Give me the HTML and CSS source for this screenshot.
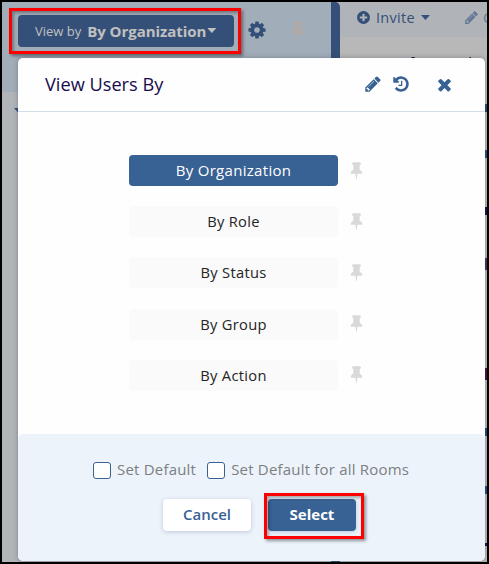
FILE: index.html
```html
<!DOCTYPE html>
<html lang="en">
<head>
<meta charset="utf-8">
<title>View Users By</title>
<link rel="stylesheet" href="styles.css">
</head>
<body>
<svg class="defs" width="0" height="0">
  <symbol id="pin" viewBox="0 0 1792 1792"><path d="M1472 1216q0 26-19 45t-45 19h-429l-51 483q-2 12-10.5 20.500t-20.500 8.500h-1q-27 0-32-27l-76-485h-404q-26 0-45-19t-19-45q0-123 78.500-221.500t177.500-98.500v-512q-52 0-90-38t-38-90 38-90 90-38h640q52 0 90 38t38 90-38 90-90 38v512q99 0 177.500 98.500t78.500 221.500z"/></symbol>
  <symbol id="pencil" viewBox="0 0 1792 1792"><path d="M491 1536l91-91-235-235-91 91v107h128v128h107zm523-928q0-22-22-22-10 0-17 7l-542 542q-7 7-7 17 0 22 22 22 10 0 17-7l542-542q7-7 7-17zm-54-192l416 416-832 832h-416v-416zm683 96q0 53-37 90l-166 166-416-416 166-165q36-38 90-38 53 0 91 38l235 234q37 39 37 91z"/></symbol>
  <symbol id="history" viewBox="0 0 1792 1792"><path d="M1664 896q0 156-61 298t-164 245-245 164-298 61q-172 0-327-72.5t-264-204.5q-7-10-6.5-22.5t8.5-20.5l137-138q10-9 25-9 16 2 23 12 73 95 179 147t225 52q104 0 198.5-40.5t163.5-109.500 109.500-163.500 40.500-198.500-40.500-198.500-109.500-163.500-163.500-109.500-198.500-40.500q-98 0-188 35.500t-160 101.500l137 138q31 30 14 69-17 40-59 40h-448q-26 0-45-19t-19-45v-448q0-42 40-59 39-17 69 14l130 129q107-101 244.500-156.500t284.500-55.500q156 0 298 61t245 164 164 245 61 298zm-640-288v448q0 14-9 23t-23 9h-320q-14 0-23-9t-9-23v-64q0-14 9-23t23-9h224v-352q0-14 9-23t23-9h64q14 0 23 9t9 23z"/></symbol>
  <symbol id="times" viewBox="0 0 1792 1792"><path d="M1490 1322q0 40-28 68l-136 136q-28 28-68 28t-68-28l-294-294-294 294q-28 28-68 28t-68-28l-136-136q-28-28-28-68t28-68l294-294-294-294q-28-28-28-68t28-68l136-136q28-28 68-28t68 28l294 294 294-294q28-28 68-28t68 28l136 136q28 28 28 68t-28 68l-294 294 294 294q28 28 28 68z"/></symbol>
  <symbol id="cog" viewBox="0 0 1792 1792"><path d="M1152 896q0-106-75-181t-181-75-181 75-75 181 75 181 181 75 181-75 75-181zm512-109v222q0 12-8 23t-20 13l-185 28q-19 54-39 91 35 50 107 138 10 12 10 25t-9 23q-27 37-99 108t-94 71q-12 0-26-9l-138-108q-44 23-91 38-16 136-29 186-7 28-36 28h-222q-14 0-24.500-8.500t-11.500-21.500l-28-184q-49-16-90-37l-141 107q-10 9-25 9-14 0-25-11-126-114-165-168-7-10-7-23 0-12 8-23 15-21 51-66.500t54-70.500q-27-50-41-99l-183-27q-13-2-21-12.500t-8-23.500v-222q0-12 8-23t19-13l186-28q14-46 39-92-40-57-107-138-10-12-10-24 0-10 9-23 26-36 98.500-107.500t94.500-71.500q13 0 26 10l138 107q44-23 91-38 16-136 29-186 7-28 36-28h222q14 0 24.500 8.500t11.500 21.500l28 184q49 16 90 37l142-107q9-9 24-9 13 0 25 10 129 119 165 170 7 8 7 22 0 12-8 23-15 21-51 66.500t-54 70.500q26 50 41 98l183 28q13 2 21 12.500t8 23.500z"/></symbol>
  <symbol id="plus" viewBox="0 0 1792 1792"><path d="M1344 960v-128q0-26-19-45t-45-19h-256v-256q0-26-19-45t-45-19h-128q-26 0-45 19t-19 45v256h-256q-26 0-45 19t-19 45v128q0 26 19 45t45 19h256v256q0 26 19 45t45 19h128q26 0 45-19t19-45v-256h256q26 0 45-19t19-45zm320-64q0 209-103 385.500t-279.500 279.500-385.500 103-385.500-103-279.500-279.500-103-385.500 103-385.500 279.500-279.500 385.500-103 385.500 103 279.500 279.500 103 385.500z"/></symbol>
</svg>
<div class="frame">
  <div class="page">
    <aside class="side">
      <div class="side-top">
        <button class="viewby"><span class="viewby-label">View by</span><b>By Organization</b><i class="caret"></i></button>
        <svg class="icon cog"><use href="#cog"/></svg>
        <svg class="icon sidepin"><use href="#pin"/></svg>
      </div>
      <div class="side-body"><i class="caret tree"></i></div>
    </aside>
    <div class="divider"></div>
    <main class="main">
      <div class="toolbar">
        <svg class="icon plus"><use href="#plus"/></svg>
        <span class="invite">Invite</span><i class="caret"></i>
        <svg class="icon edit"><use href="#pencil"/></svg>
        <span class="cut">C</span>
      </div>
      <div class="count">1 - 10 of 2540 ul</div>
      <div class="edge">
        <i class="sliver s1"></i><i class="sliver s2"></i><i class="sliver s3"></i><i class="sliver s4"></i><i class="sliver s5"></i><i class="sliver s6"></i><i class="sliver s7"></i><i class="sliver s8"></i>
      </div>
    </main>
  </div>
  <section class="modal">
    <header class="head">
      <h1>View Users By</h1>
      <svg class="icon"><use href="#pencil"/></svg>
      <svg class="icon hist"><use href="#history"/></svg>
      <svg class="icon close"><use href="#times"/></svg>
    </header>
    <div class="options">
      <div class="row"><button class="option selected">By Organization</button><svg class="icon"><use href="#pin"/></svg></div>
      <div class="row"><button class="option">By Role</button><svg class="icon"><use href="#pin"/></svg></div>
      <div class="row"><button class="option">By Status</button><svg class="icon"><use href="#pin"/></svg></div>
      <div class="row"><button class="option">By Group</button><svg class="icon"><use href="#pin"/></svg></div>
      <div class="row"><button class="option">By Action</button><svg class="icon"><use href="#pin"/></svg></div>
    </div>
    <footer class="foot">
      <div class="checks">
        <label class="check"><i class="box"></i><span>Set Default</span></label>
        <label class="check"><i class="box"></i><span>Set Default for all Rooms</span></label>
      </div>
      <div class="actions">
        <button class="btn cancel">Cancel</button>
        <button class="btn select">Select</button>
      </div>
    </footer>
  </section>
  <div class="mark mark-view"></div>
  <div class="mark mark-select"></div>
</div>
</body>
</html>
```
FILE: styles.css
```css
* { box-sizing: border-box; }
body { margin: 0; font-family: "Open Sans", sans-serif; overflow: hidden; }
button { border: 0; padding: 0; font-family: inherit; white-space: nowrap; }
.defs { display: block; position: absolute; }
.frame { position: relative; width: 489px; height: 564px; border: 2px solid #000; overflow: hidden; }
.icon { width: 18px; height: 18px; flex: none; fill: #386194; display: block; }
.caret { width: 9px; height: 5px; background: currentColor; clip-path: polygon(0 0, 100% 0, 50% 100%); flex: none; }

.page { display: flex; height: 560px; background: #b8b8b8; }
.side { width: 329px; flex: none; display: flex; flex-direction: column; }
.side-top { height: 90px; padding: 13px 0 0 16px; display: flex; align-items: flex-start; background: #a2adba; }
.side-body { flex: 1; background: #b1b4b8; padding: 16px 0 0 12px; }
.tree { display: block; color: #355078; }
.viewby { width: 216px; height: 32px; border-radius: 4px; background: #355078; color: #c0c0c0; display: flex; align-items: center; padding: 0 0 1px 17px; font-size: 13px; }
.viewby b { font-size: 15px; font-weight: 700; letter-spacing: -.05px; margin: 0 1px 0 6px; }
.cog { width: 20px; height: 20px; margin: 5px 0 0 13px; fill: #355078; }
.sidepin { width: 21px; height: 20px; margin: 5px 0 0 20px; fill: #aeaaa8; }
.divider { width: 9px; flex: none; background: #355078; border-top-right-radius: 5px; }
.main { flex: 1; min-width: 0; overflow: hidden; }
.toolbar { height: 35px; display: flex; align-items: center; padding: 0 0 4px 16px; background: #b0b4b8; color: #355078; font-size: 14.5px; letter-spacing: .3px; white-space: nowrap; }
.plus { width: 15px; height: 15px; fill: #355078; margin-right: 5px; }
.toolbar .caret { margin-left: 6px; }
.edit { width: 15px; height: 15px; margin-left: 34px; fill: #667a95; }
.cut { margin-left: 4px; color: #667a95; }
.count { height: 20px; padding: 15px 0 0 15px; font-size: 15px; letter-spacing: .35px; line-height: 20px; color: #120a2c; white-space: nowrap; }
.edge { display: flex; flex-direction: column; align-items: flex-end; padding-top: 47px; }
.sliver { width: 2px; height: 8px; flex: none; background: #244979; }
.s2 { margin-top: 38px; }
.s3 { margin-top: 49px; background: #19104f; }
.s4 { margin-top: 43px; height: 12px; background: #52304f; }
.s5 { margin-top: 98px; height: 12px; background: #520b44; }
.s6 { margin-top: 48px; background: #244979; }
.s7 { margin-top: 50px; }
.s8 { margin-top: 49px; height: 3px; background: #19104f; }

.modal { position: absolute; left: 16px; top: 56px; width: 467px; height: 503px; background: #fefefe; border-radius: 5px; box-shadow: 0 0 5px rgba(40, 50, 65, .35); overflow: hidden; display: flex; flex-direction: column; }
.head { height: 54px; flex: none; border-bottom: 1px solid #d1dde9; display: flex; align-items: center; padding: 0 31px 2px 27px; }
h1 { margin: 0; flex: 1; font-size: 18.2px; font-weight: 400; color: #180c4d; }
.hist { margin-left: 10px; }
.close { width: 19px; height: 19px; margin: 1px 0 0 25px; }
.options { padding: 43px 0 0 111px; flex: 1; display: flex; flex-direction: column; gap: 20px; }
.row { display: flex; align-items: center; gap: 9px; height: 31.200px; }
.row .icon { width: 19px; fill: #d9d9d9; margin: 0 0 2px -.5px; }
.option { width: 209px; height: 31px; border-radius: 4px; background: #fafafa; color: #242424; font-size: 14.7px; letter-spacing: .3px; padding-bottom: 1px; }
.option.selected { background: #386194; color: #fff; font-size: 15px; }
.foot { height: 127px; flex: none; background: #ecf3fa; border-radius: 5px; padding-top: 27px; }
.checks { display: flex; gap: 11px; padding-left: 75px; height: 18px; align-items: center; }
.check { display: flex; align-items: center; gap: 6px; font-size: 15px; letter-spacing: .2px; color: #7d7f82; white-space: nowrap; }
.check span { margin-top: -2px; }
.box { width: 18px; height: 17px; border: 1px solid #386194; border-radius: 3px; background: #fff; }
.actions { display: flex; gap: 17px; padding: 20px 0 0 145px; }
.btn { width: 88px; height: 32px; border-radius: 4px; font-size: 15px; font-weight: 600; padding-bottom: 2px; color: #386194; background: #fff; box-shadow: 0 1px 4px rgba(60, 70, 130, .25); }
.select { color: #fff; background: #386194; font-weight: 700; }

.mark { position: absolute; border: 3px solid #f00; box-shadow: 2px 2px 3px rgba(0, 0, 0, .4), inset 2px 2px 3px rgba(0, 0, 0, .3); }
.mark-view { left: 7px; top: 6px; width: 232px; height: 46px; }
.mark-select { left: 262px; top: 491px; width: 100px; height: 46px; }
```
